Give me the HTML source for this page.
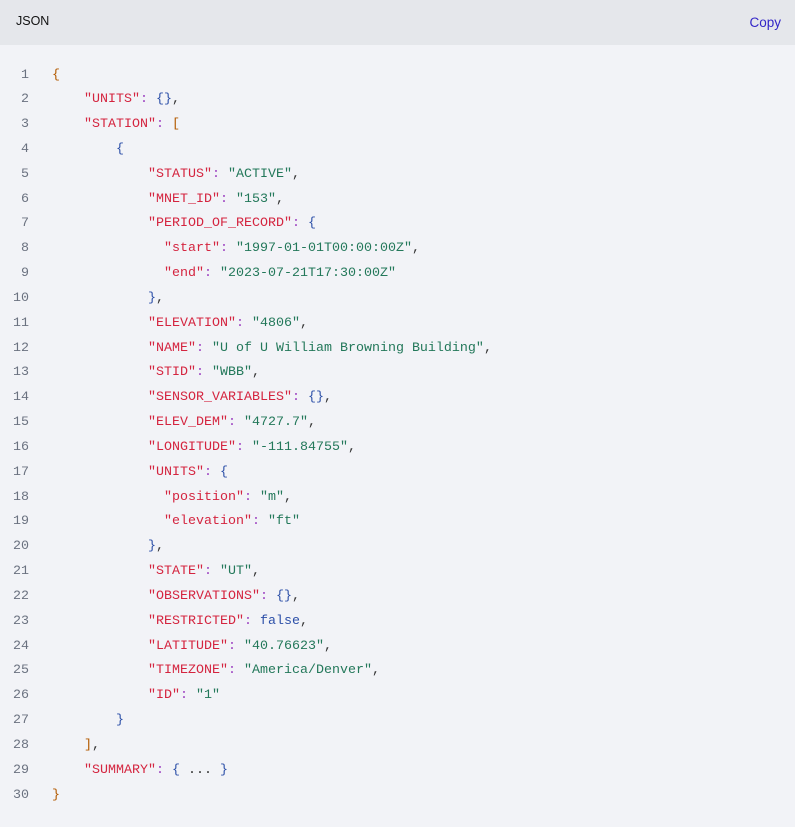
<!DOCTYPE html>
<html><head><meta charset="utf-8"><style>
body{margin:0;width:795px;height:827px;background:#f2f3f7;overflow:hidden}
.h{height:45px;background:#e5e7eb;position:relative;font-family:"Liberation Sans",sans-serif;font-size:12.5px;color:#111}
.h .t{position:absolute;left:16px;top:14px}
.h .c{position:absolute;right:14px;top:15px;color:#3326c8;font-size:13.5px}
pre{margin:0;position:absolute;top:63.5px;left:0;font-family:"Liberation Mono",monospace;font-size:13.33px;line-height:24.83px;color:#333}
.n{display:inline-block;width:29px;text-align:right;color:#6b7280;margin-right:23px}
.k{color:#d4243f}.s{color:#23785a}.p{color:#9b3fc0}.b{color:#2c4fa8}.o{color:#b35a00}
</style></head><body>
<div class="h"><span class="t">JSON</span><span class="c">Copy</span></div>
<pre><span class="n">1</span><span class="o">{</span>
<span class="n">2</span>    <span class="k">"UNITS"</span><span class="p">:</span> <span class="b">{}</span>,
<span class="n">3</span>    <span class="k">"STATION"</span><span class="p">:</span> <span class="o">[</span>
<span class="n">4</span>        <span class="b">{</span>
<span class="n">5</span>            <span class="k">"STATUS"</span><span class="p">:</span> <span class="s">"ACTIVE"</span>,
<span class="n">6</span>            <span class="k">"MNET_ID"</span><span class="p">:</span> <span class="s">"153"</span>,
<span class="n">7</span>            <span class="k">"PERIOD_OF_RECORD"</span><span class="p">:</span> <span class="b">{</span>
<span class="n">8</span>              <span class="k">"start"</span><span class="p">:</span> <span class="s">"1997-01-01T00:00:00Z"</span>,
<span class="n">9</span>              <span class="k">"end"</span><span class="p">:</span> <span class="s">"2023-07-21T17:30:00Z"</span>
<span class="n">10</span>            <span class="b">}</span>,
<span class="n">11</span>            <span class="k">"ELEVATION"</span><span class="p">:</span> <span class="s">"4806"</span>,
<span class="n">12</span>            <span class="k">"NAME"</span><span class="p">:</span> <span class="s">"U of U William Browning Building"</span>,
<span class="n">13</span>            <span class="k">"STID"</span><span class="p">:</span> <span class="s">"WBB"</span>,
<span class="n">14</span>            <span class="k">"SENSOR_VARIABLES"</span><span class="p">:</span> <span class="b">{}</span>,
<span class="n">15</span>            <span class="k">"ELEV_DEM"</span><span class="p">:</span> <span class="s">"4727.7"</span>,
<span class="n">16</span>            <span class="k">"LONGITUDE"</span><span class="p">:</span> <span class="s">"-111.84755"</span>,
<span class="n">17</span>            <span class="k">"UNITS"</span><span class="p">:</span> <span class="b">{</span>
<span class="n">18</span>              <span class="k">"position"</span><span class="p">:</span> <span class="s">"m"</span>,
<span class="n">19</span>              <span class="k">"elevation"</span><span class="p">:</span> <span class="s">"ft"</span>
<span class="n">20</span>            <span class="b">}</span>,
<span class="n">21</span>            <span class="k">"STATE"</span><span class="p">:</span> <span class="s">"UT"</span>,
<span class="n">22</span>            <span class="k">"OBSERVATIONS"</span><span class="p">:</span> <span class="b">{}</span>,
<span class="n">23</span>            <span class="k">"RESTRICTED"</span><span class="p">:</span> <span class="b">false</span>,
<span class="n">24</span>            <span class="k">"LATITUDE"</span><span class="p">:</span> <span class="s">"40.76623"</span>,
<span class="n">25</span>            <span class="k">"TIMEZONE"</span><span class="p">:</span> <span class="s">"America/Denver"</span>,
<span class="n">26</span>            <span class="k">"ID"</span><span class="p">:</span> <span class="s">"1"</span>
<span class="n">27</span>        <span class="b">}</span>
<span class="n">28</span>    <span class="o">]</span>,
<span class="n">29</span>    <span class="k">"SUMMARY"</span><span class="p">:</span> <span class="b">{</span> ... <span class="b">}</span>
<span class="n">30</span><span class="o">}</span></pre>
</body></html>
